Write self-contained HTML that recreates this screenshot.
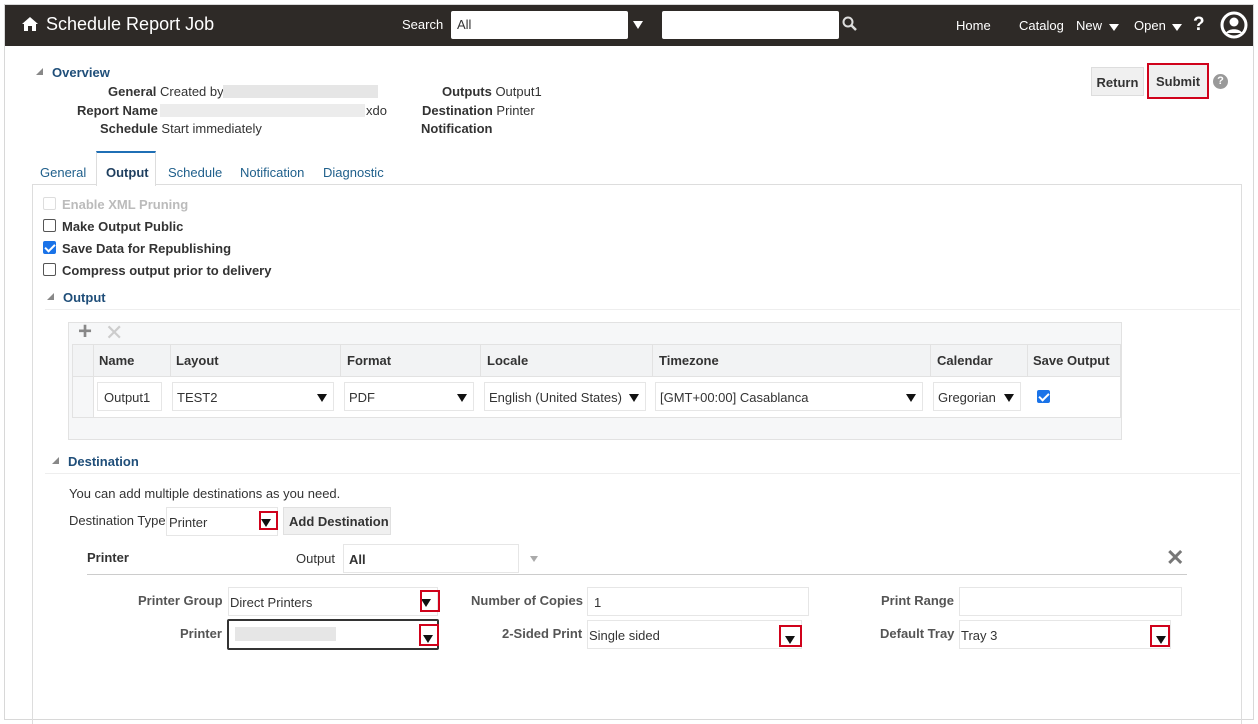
<!DOCTYPE html>
<html><head><meta charset="utf-8"><style>
*{box-sizing:border-box}
body{margin:0;width:1258px;height:723px;background:#fff;font-family:"Liberation Sans",Arial,sans-serif;font-size:13px;color:#333;position:relative;overflow:hidden}
.a{position:absolute;white-space:nowrap}
.frame{position:absolute;left:4px;top:4px;width:1250px;height:716px;border:1px solid #d8d8d8}
.hdr{position:absolute;left:5px;top:5px;width:1248px;height:41px;background:#2e2a27;color:#fff}
.b{font-weight:bold}
.lnk{color:#1f5f8b}
.inp{position:absolute;background:#fff;border:1px solid #e6e6e6}
.tri{display:inline-block;width:0;height:0;border-left:5px solid transparent;border-right:5px solid transparent;border-top:8px solid #111}
.red{position:absolute;border:2px solid #d0021b}
.cb{position:absolute;width:13px;height:13px;border:1px solid #555;border-radius:2px;background:#fff}
.cbc{background:#1a73e8;border-color:#1a73e8}
.cbc:after{content:"";position:absolute;left:3px;top:0px;width:4px;height:8px;border:solid #fff;border-width:0 2px 2px 0;transform:rotate(45deg)}
.sect{position:absolute;color:#1f4e79;font-weight:bold}
.sect:before{content:"";position:absolute;left:-16px;top:3px;border-left:7px solid transparent;border-bottom:7px solid #888}
th,td{padding:0}
</style></head><body>
<div class="frame"></div>
<div class="hdr">
 <svg class="a" style="left:17px;top:12px" width="16" height="14" viewBox="0 0 16 14"><path d="M8 0L0 7h2v7h4V9h4v5h4V7h2z" fill="#fff"/></svg>
 <div class="a" style="left:41px;top:9px;font-size:18px">Schedule Report Job</div>
 <div class="a" style="left:397px;top:12px;font-size:13px">Search</div>
 <div class="a" style="left:446px;top:6px;width:177px;height:28px;background:#fff;border-radius:2px;color:#333;padding:6px 6px;font-size:13px">All</div>
 <div class="a" style="left:628px;top:16px;border-left:5px solid transparent;border-right:5px solid transparent;border-top:8px solid #fff"></div>
 <div class="a" style="left:657px;top:6px;width:177px;height:28px;background:#fff;border-radius:2px"></div>
 <svg class="a" style="left:837px;top:11px" width="16" height="16" viewBox="0 0 16 16"><circle cx="6" cy="6" r="4.5" stroke="#ddd" stroke-width="2" fill="none"/><path d="M9 9l5 5" stroke="#ddd" stroke-width="2.5"/></svg>
 <div class="a" style="left:951px;top:13px">Home</div>
 <div class="a" style="left:1014px;top:13px">Catalog</div>
 <div class="a" style="left:1071px;top:13px">New</div>
 <div class="a" style="left:1104px;top:19px;border-left:5px solid transparent;border-right:5px solid transparent;border-top:7px solid #fff"></div>
 <div class="a" style="left:1129px;top:13px">Open</div>
 <div class="a" style="left:1167px;top:19px;border-left:5px solid transparent;border-right:5px solid transparent;border-top:7px solid #fff"></div>
 <div class="a b" style="left:1188px;top:9px;font-size:19px">?</div>
 <svg class="a" style="left:1215px;top:6px" width="28" height="28" viewBox="0 0 28 28"><circle cx="14" cy="14" r="12" fill="none" stroke="#fff" stroke-width="3"/><circle cx="14" cy="11" r="4.5" fill="#fff"/><path d="M6 22c2-5 14-5 16 0" fill="#fff"/></svg>
</div>

<div class="sect" style="left:52px;top:65px">Overview</div>
<div class="a" style="left:108px;top:84px"><span class="b">General</span> Created by</div>
<div class="a" style="left:223px;top:85px;width:155px;height:13px;background:#e6e6e6"></div>
<div class="a" style="left:77px;top:103px"><span class="b">Report Name</span></div>
<div class="a" style="left:160px;top:104px;width:205px;height:13px;background:#ececec"></div>
<div class="a" style="left:366px;top:103px">xdo</div>
<div class="a" style="left:100px;top:121px"><span class="b">Schedule</span> Start immediately</div>
<div class="a" style="left:442px;top:84px"><span class="b">Outputs</span> Output1</div>
<div class="a" style="left:422px;top:103px"><span class="b">Destination</span> Printer</div>
<div class="a" style="left:421px;top:121px"><span class="b">Notification</span></div>

<div class="a b" style="left:1091px;top:67px;width:53px;height:29px;background:#f0f0f0;border:1px solid #ddd;padding:7px 0;text-align:center">Return</div>
<div class="a b" style="left:1147px;top:63px;width:62px;height:36px;border:2px solid #d0021b;background:#f0f0f0;padding:9px 0;text-align:center">Submit</div>
<div class="a" style="left:1213px;top:74px;width:15px;height:15px;border-radius:50%;background:#999;color:#fff;font-size:11px;font-weight:bold;text-align:center;line-height:15px">?</div>

<!-- tabs -->
<div class="a" style="left:32px;top:184px;width:1210px;height:540px;border:1px solid #ddd;border-bottom:none"></div>
<div class="a" style="left:96px;top:151px;width:60px;height:35px;background:#fff;border:1px solid #ddd;border-top:2px solid #1f6fb5;border-bottom:none"></div>
<div class="a lnk" style="left:40px;top:165px">General</div>
<div class="a b" style="left:106px;top:165px;color:#1f3f5f">Output</div>
<div class="a lnk" style="left:168px;top:165px">Schedule</div>
<div class="a lnk" style="left:240px;top:165px">Notification</div>
<div class="a lnk" style="left:323px;top:165px">Diagnostic</div>

<div class="cb" style="left:43px;top:197px;border-color:#ddd"></div><div class="a b" style="left:62px;top:197px;color:#bbb">Enable XML Pruning</div>
<div class="cb" style="left:43px;top:219px"></div><div class="a b" style="left:62px;top:219px">Make Output Public</div>
<div class="cb cbc" style="left:43px;top:241px"></div><div class="a b" style="left:62px;top:241px">Save Data for Republishing</div>
<div class="cb" style="left:43px;top:263px"></div><div class="a b" style="left:62px;top:263px">Compress output prior to delivery</div>
<div class="sect" style="left:63px;top:290px">Output</div>
<div class="a" style="left:45px;top:309px;width:1195px;height:1px;background:#eee"></div>

<!-- table -->
<div class="a" style="left:68px;top:322px;width:1054px;height:118px;background:#f6f7f8;border:1px solid #e2e2e2"></div>
<div class="a b" style="left:78px;top:318px;font-size:24px;color:#888">+</div>
<div class="a" style="left:105px;top:320px;font-size:22px;color:#ccc">✕</div>
<table class="a" style="left:72px;top:344px;border-collapse:collapse;background:#fff">
<tr style="height:32px;background:#f2f3f4;font-weight:bold">
<td style="width:21px;border:1px solid #e2e2e2"></td>
<td style="width:77px;border:1px solid #e2e2e2;padding-left:5px">Name</td>
<td style="width:170px;border:1px solid #e2e2e2;padding-left:5px">Layout</td>
<td style="width:140px;border:1px solid #e2e2e2;padding-left:6px">Format</td>
<td style="width:172px;border:1px solid #e2e2e2;padding-left:6px">Locale</td>
<td style="width:278px;border:1px solid #e2e2e2;padding-left:6px">Timezone</td>
<td style="width:97px;border:1px solid #e2e2e2;padding-left:6px">Calendar</td>
<td style="width:93px;border:1px solid #e2e2e2;padding-left:5px">Save Output</td>
</tr>
<tr style="height:41px"><td style="border:1px solid #e2e2e2;background:#f6f7f8"></td><td colspan="7" style="border:1px solid #e2e2e2"></td></tr>
</table>
<div class="inp" style="left:97px;top:382px;width:65px;height:29px;padding:7px 6px">Output1</div>
<div class="inp" style="left:172px;top:382px;width:162px;height:29px;padding:7px 4px">TEST2<span class="tri a" style="right:6px;top:11px"></span></div>
<div class="inp" style="left:344px;top:382px;width:130px;height:29px;padding:7px 4px">PDF<span class="tri a" style="right:6px;top:11px"></span></div>
<div class="inp" style="left:484px;top:382px;width:162px;height:29px;padding:7px 4px">English (United States)<span class="tri a" style="right:6px;top:11px"></span></div>
<div class="inp" style="left:655px;top:382px;width:268px;height:29px;padding:7px 4px">[GMT+00:00] Casablanca<span class="tri a" style="right:6px;top:11px"></span></div>
<div class="inp" style="left:933px;top:382px;width:88px;height:29px;padding:7px 4px">Gregorian<span class="tri a" style="right:6px;top:11px"></span></div>
<div class="cb cbc" style="left:1037px;top:390px"></div>

<div class="sect" style="left:68px;top:454px">Destination</div>
<div class="a" style="left:45px;top:473px;width:1195px;height:1px;background:#eee"></div>
<div class="a" style="left:69px;top:486px">You can add multiple destinations as you need.</div>
<div class="a" style="left:69px;top:513px">Destination Type</div>
<div class="inp" style="left:166px;top:507px;width:112px;height:29px;padding:7px 2px">Printer<span class="tri a" style="right:6px;top:11px"></span></div>
<div class="red" style="left:259px;top:511px;width:19px;height:19px"></div>
<div class="a b" style="left:283px;top:507px;width:108px;height:28px;background:#f0f0f0;border:1px solid #e0e0e0;padding:6px 5px">Add Destination</div>

<div class="a b" style="left:87px;top:550px">Printer</div>
<div class="a" style="left:296px;top:551px">Output</div>
<div class="inp" style="left:343px;top:544px;width:176px;height:29px;padding:7px 5px;font-weight:bold">All</div>
<div class="a" style="left:530px;top:556px;border-left:4px solid transparent;border-right:4px solid transparent;border-top:6px solid #aaa"></div>
<div class="a b" style="left:1166px;top:545px;font-size:22px;color:#777">✕</div>
<div class="a" style="left:87px;top:574px;width:1100px;height:1px;background:#ccc"></div>

<div class="a b" style="left:138px;top:593px;color:#555">Printer Group</div>
<div class="inp" style="left:228px;top:587px;width:210px;height:29px;padding:7px 1px">Direct Printers<span class="tri a" style="right:6px;top:11px"></span></div>
<div class="red" style="left:420px;top:590px;width:20px;height:22px"></div>
<div class="a b" style="left:180px;top:626px;color:#555">Printer</div>
<div class="a" style="left:227px;top:619px;width:212px;height:31px;border:2px solid #333;border-radius:2px;background:#fff"></div>
<div class="a" style="left:235px;top:627px;width:101px;height:14px;background:#e6e6e6"></div>
<div class="a" style="left:423px;top:631px" ><span class="tri"></span></div>
<div class="red" style="left:419px;top:624px;width:20px;height:22px"></div>

<div class="a b" style="left:471px;top:593px;color:#555">Number of Copies</div>
<div class="inp" style="left:587px;top:587px;width:222px;height:29px;padding:7px 6px">1</div>
<div class="a b" style="left:502px;top:626px;color:#555">2-Sided Print</div>
<div class="inp" style="left:587px;top:620px;width:215px;height:29px;padding:7px 1px">Single sided</div>
<div class="a" style="left:785px;top:632px"><span class="tri"></span></div>
<div class="red" style="left:779px;top:625px;width:23px;height:22px"></div>

<div class="a b" style="left:881px;top:593px;color:#555">Print Range</div>
<div class="inp" style="left:959px;top:587px;width:223px;height:29px"></div>
<div class="a b" style="left:880px;top:626px;color:#555">Default Tray</div>
<div class="inp" style="left:959px;top:620px;width:212px;height:29px;padding:7px 1px">Tray 3</div>
<div class="a" style="left:1156px;top:632px"><span class="tri"></span></div>
<div class="red" style="left:1150px;top:625px;width:20px;height:22px"></div>
</body></html>
